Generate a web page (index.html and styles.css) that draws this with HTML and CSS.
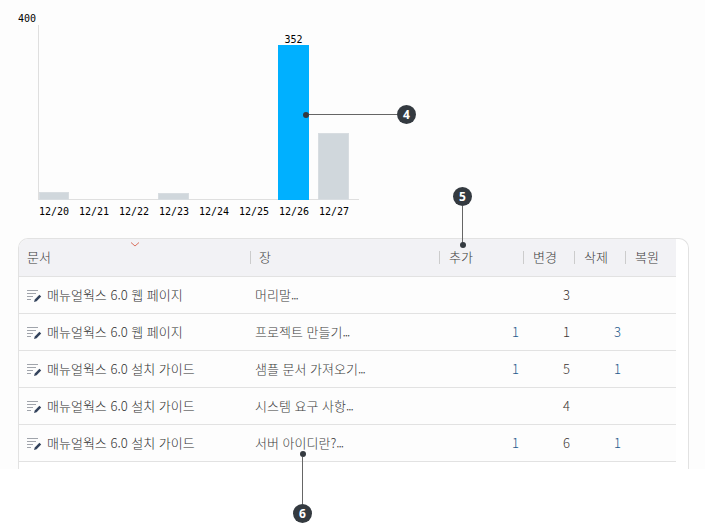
FILE: index.html
```html
<!DOCTYPE html>
<html lang="ko">
<head>
<meta charset="utf-8">
<title>문서 통계</title>
<link rel="stylesheet" href="styles.css">
</head>
<body>
<main class="shot">
  <section class="chart">
    <div class="y-label">400</div>
    <div class="plot">
      <div class="col"><div class="bar grey h-a"></div></div>
      <div class="col"></div>
      <div class="col"></div>
      <div class="col"><div class="bar grey h-b"></div></div>
      <div class="col"></div>
      <div class="col"></div>
      <div class="col"><span class="val">352</span><div class="bar blue h-c"></div></div>
      <div class="col"><div class="bar grey h-d"></div></div>
    </div>
    <div class="x-labels">
      <span>12/20</span><span>12/21</span><span>12/22</span><span>12/23</span><span>12/24</span><span>12/25</span><span>12/26</span><span>12/27</span>
    </div>
  </section>
  <section class="card">
    <div class="sort-caret"><svg width="10" height="5" viewBox="0 0 10 5"><path d="M1 .5 5 4 9 .5" fill="none" stroke="#d9705f" stroke-width="1"/></svg></div>
    <div class="table">
      <div class="row head">
        <div class="c doc">문서</div><div class="c ch"><i></i>장</div><div class="c add"><i></i>추가</div><div class="c chg"><i></i>변경</div><div class="c del"><i></i>삭제</div><div class="c res"><i></i>복원</div>
      </div>
      <div class="row">
        <div class="c doc"><svg class="ico" viewBox="0 0 15 16"><path d="M0 4.5h11M0 7.5h9M0 10.5h6M0 13.5h4" stroke="#a0a4ab" fill="none"/><path d="M7 16l.8-2.6 4.6-4.6 1.8 1.8-4.6 4.6z" fill="#33435c"/></svg>매뉴얼웍스 6.0 웹 페이지</div><div class="c ch">머리말<span class="dots">...</span></div><div class="c add"></div><div class="c chg num">3</div><div class="c del"></div><div class="c res"></div>
      </div>
      <div class="row">
        <div class="c doc"><svg class="ico" viewBox="0 0 15 16"><path d="M0 4.5h11M0 7.5h9M0 10.5h6M0 13.5h4" stroke="#a0a4ab" fill="none"/><path d="M7 16l.8-2.6 4.6-4.6 1.8 1.8-4.6 4.6z" fill="#33435c"/></svg>매뉴얼웍스 6.0 웹 페이지</div><div class="c ch">프로젝트 만들기<span class="dots">...</span></div><div class="c add num">1</div><div class="c chg num">1</div><div class="c del num">3</div><div class="c res"></div>
      </div>
      <div class="row">
        <div class="c doc"><svg class="ico" viewBox="0 0 15 16"><path d="M0 4.5h11M0 7.5h9M0 10.5h6M0 13.5h4" stroke="#a0a4ab" fill="none"/><path d="M7 16l.8-2.6 4.6-4.6 1.8 1.8-4.6 4.6z" fill="#33435c"/></svg>매뉴얼웍스 6.0 설치 가이드</div><div class="c ch">샘플 문서 가져오기<span class="dots">...</span></div><div class="c add num">1</div><div class="c chg num">5</div><div class="c del num">1</div><div class="c res"></div>
      </div>
      <div class="row">
        <div class="c doc"><svg class="ico" viewBox="0 0 15 16"><path d="M0 4.5h11M0 7.5h9M0 10.5h6M0 13.5h4" stroke="#a0a4ab" fill="none"/><path d="M7 16l.8-2.6 4.6-4.6 1.8 1.8-4.6 4.6z" fill="#33435c"/></svg>매뉴얼웍스 6.0 설치 가이드</div><div class="c ch">시스템 요구 사항<span class="dots">...</span></div><div class="c add"></div><div class="c chg num">4</div><div class="c del"></div><div class="c res"></div>
      </div>
      <div class="row">
        <div class="c doc"><svg class="ico" viewBox="0 0 15 16"><path d="M0 4.5h11M0 7.5h9M0 10.5h6M0 13.5h4" stroke="#a0a4ab" fill="none"/><path d="M7 16l.8-2.6 4.6-4.6 1.8 1.8-4.6 4.6z" fill="#33435c"/></svg>매뉴얼웍스 6.0 설치 가이드</div><div class="c ch">서버 아이디란?<span class="dots">...</span></div><div class="c add num">1</div><div class="c chg num">6</div><div class="c del num">1</div><div class="c res"></div>
      </div>
    </div>
  </section>
  <div class="callout c4"><b class="dot"></b><b class="line"></b><b class="badge">4</b></div>
  <div class="callout c5"><b class="badge">5</b><b class="line"></b><b class="dot"></b></div>
  <div class="callout c6"><b class="dot"></b><b class="line"></b><b class="badge">6</b></div>
</main>
</body>
</html>
```
FILE: styles.css
```css
* { box-sizing: border-box; }
html, body { margin: 0; padding: 0; background: #fff; }
body { width: 705px; height: 525px; overflow: hidden; }
.shot { position: relative; width: 705px; height: 469px; background: #fdfdfd; padding: 12px 0 0 0; font-family: "Noto Sans CJK KR", "Noto Sans", sans-serif; }

.chart { height: 226px; padding: 13px 0 0 38px; font-family: "DejaVu Sans Mono", monospace; font-size: 10px; color: #000; position: relative; }
.y-label { position: absolute; left: 18px; top: 0; line-height: 13px; }
.plot { width: 321px; height: 175px; display: flex; border-left: 1px solid #dfdfdf; border-bottom: 1px solid #dfdfdf; align-items: flex-end; }
.col { width: 40px; display: flex; flex-direction: column; justify-content: flex-end; align-items: flex-start; flex: none; margin-bottom: -1px; height: calc(100% + 1px); }
.col:first-child { width: 39px; }
.bar { width: 31px; }
.col:first-child .bar { width: 30px; }
.grey { background: #d0d7dc; border: 1px solid #d8dde1; }
.blue { background: #00b0ff; }
.h-a { height: 8px; }
.h-b { height: 7px; }
.h-c { height: 155px; }
.h-d { height: 67px; }
.val { width: 31px; text-align: center; line-height: 11px; }
.x-labels { display: flex; margin-top: 5px; padding-left: 1px; line-height: 13px; }
.x-labels span { width: 40px; flex: none; }

.card { position: relative; margin-left: 18px; width: 671px; height: 231px; border: 1px solid #e2e2e2; border-bottom: 0; border-radius: 10px 10px 0 0; background: #fff; color: #2e2e2e; font-size: 13px; font-weight: 300; overflow: hidden; }
.sort-caret { position: absolute; left: 111px; top: 3px; line-height: 0; }
.table { width: 657px; }
.row { display: flex; height: 37px; padding-bottom: 2px; align-items: center; border-bottom: 1px solid #e2e2e2; background: #fdfdfd; }
.row.head { height: 38px; background: #f2f2f5; color: #3c3c3c; }
.c { flex: none; display: flex; align-items: center; white-space: nowrap; }
.c i { display: block; width: 1px; height: 13px; background: #ccc; margin: 2px 9px 0 0; flex: none; }
.head .ch i { margin-right: 8px; }
.doc { width: 231px; padding-left: 8px; }
.ch { width: 189px; }
.row:not(.head) .ch { padding-left: 5px; color: #3c3c3c; }
.dots { letter-spacing: -1px; }
.add { width: 84px; }
.chg { width: 51px; }
.del { width: 51px; }
.res { width: 50px; }
.ico { width: 15px; height: 16px; margin-right: 5px; flex: none; }
.row:not(.head) .add.num { padding-left: 73px; color: #1f5a8c; }
.row:not(.head) .chg.num { padding-left: 40px; color: #3a3432; }
.row:not(.head) .del.num { padding-left: 40px; color: #1f5a8c; }

.callout { position: absolute; display: flex; align-items: center; }
.dot { width: 6px; height: 6px; border-radius: 50%; background: #343a40; flex: none; }
.line { background: #666; flex: none; }
.badge { width: 19px; height: 19px; border-radius: 50%; background: #343a40; color: #fff; font: bold 12px/19px "Noto Sans", sans-serif; text-align: center; flex: none; }
.c4 { left: 303px; top: 105px; }
.c4 .line { width: 88px; height: 1px; }
.c5 { left: 453px; top: 187px; flex-direction: column; }
.c5 .line { width: 1px; height: 37px; }
.c5 .dot { margin-top: -1px; }
.c6 { left: 293px; top: 451px; flex-direction: column; }
.c6 .line { width: 1px; height: 47px; }
```
